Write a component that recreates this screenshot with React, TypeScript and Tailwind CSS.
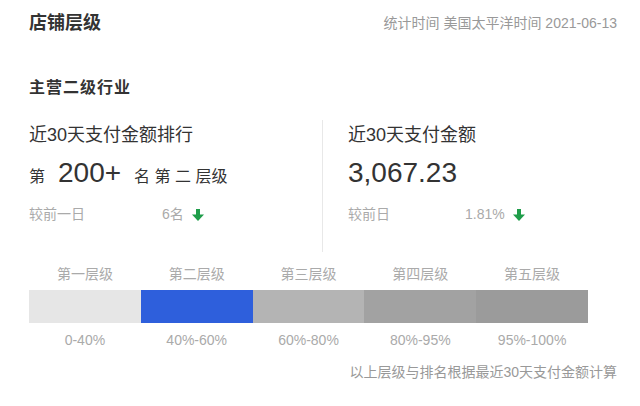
const tiers = [
  { name: "第一层级", range: "0-40%", color: "bg-[#e6e6e6]" },
  { name: "第二层级", range: "40%-60%", color: "bg-[#2e5fdc]" },
  { name: "第三层级", range: "60%-80%", color: "bg-[#b4b4b4]" },
  { name: "第四层级", range: "80%-95%", color: "bg-[#a2a2a2]" },
  { name: "第五层级", range: "95%-100%", color: "bg-[#9b9b9b]" },
];

function DownArrow() {
  return (
    <svg width="12" height="12" viewBox="0 0 12 12" className="ml-2 mt-[1px]">
      <rect x="4" y="0" width="4" height="6" fill="#1f9d4a" />
      <polygon points="0,5.5 12,5.5 6,12" fill="#1f9d4a" />
    </svg>
  );
}

export default function App() {
  return (
    <div className="w-[640px] h-[406px] bg-white pl-[29px] pr-[23px] pt-[11px] font-['Liberation_Sans','Noto_Sans_CJK_SC',sans-serif] text-[#333]">
      {/* header */}
      <div className="flex h-[24px] items-center justify-between">
        <h1 className="text-[18px] font-bold leading-[24px]">店铺层级</h1>
        <span className="text-[14px] leading-[20px] text-[#999]">
          统计时间 美国太平洋时间 2021-06-13
        </span>
      </div>

      <h2 className="mt-[42px] text-[16px] font-bold leading-[22px] tracking-[1px]">
        主营二级行业
      </h2>

      {/* metrics */}
      <div className="mt-[21px] flex h-[132px]">
        <div className="w-[294px] border-r border-[#e8e8e8] pt-[3px]">
          <div className="text-[18px] leading-[24px]">近30天支付金额排行</div>
          <div className="mt-[8px] flex h-[36px] items-baseline">
            <span className="text-[16px]">第</span>
            <span className="mx-[13px] text-[28px] leading-[36px]">200+</span>
            <span className="text-[16px]">名 第 二 层级</span>
          </div>
          <div className="mt-[13px] flex h-[20px] items-center text-[14px] text-[#aaa]">
            <span className="w-[133px]">较前一日</span>
            <span>6名</span>
            <DownArrow />
          </div>
        </div>
        <div className="flex-1 pl-[25px] pt-[3px]">
          <div className="text-[18px] leading-[24px]">近30天支付金额</div>
          <div className="mt-[8px] h-[36px] text-[28px] leading-[36px]">3,067.23</div>
          <div className="mt-[13px] flex h-[20px] items-center text-[14px] text-[#aaa]">
            <span className="w-[117px]">较前日</span>
            <span>1.81%</span>
            <DownArrow />
          </div>
        </div>
      </div>

      {/* tier bar */}
      <div className="mt-[12px] w-[559px]">
        <div className="grid grid-cols-5 text-center text-[14px] leading-[20px] text-[#aaa]">
          {tiers.map((t) => (
            <span key={t.name}>{t.name}</span>
          ))}
        </div>
        <div className="mt-[6px] grid h-[33px] grid-cols-5">
          {tiers.map((t) => (
            <div key={t.name} className={t.color} />
          ))}
        </div>
        <div className="mt-[7px] grid grid-cols-5 text-center text-[14px] leading-[20px] text-[#aaa]">
          {tiers.map((t) => (
            <span key={t.range}>{t.range}</span>
          ))}
        </div>
      </div>

      <p className="mt-[12px] text-right text-[14px] leading-[20px] text-[#999]">
        以上层级与排名根据最近30天支付金额计算
      </p>
    </div>
  );
}
